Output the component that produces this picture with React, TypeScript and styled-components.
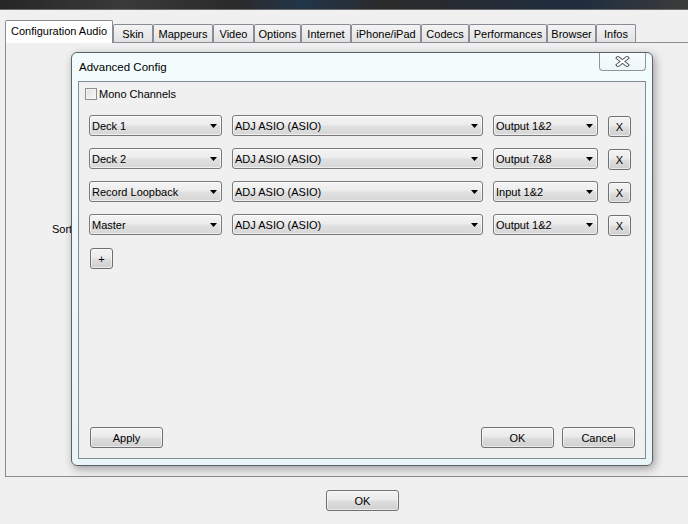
import React from 'react';
import styled, { createGlobalStyle } from 'styled-components';

const GlobalStyle = createGlobalStyle`
  html, body {
    margin: 0;
    padding: 0;
    background: #f0f0f0;
    overflow: hidden;
  }
  body {
    font-family: "Liberation Sans", Arial, sans-serif;
    font-size: 11px;
    color: #000;
  }
`;

const Page = styled.div`
  position: relative;
  width: 688px;
  height: 524px;
  overflow: hidden;
`;

const TopStrip = styled.div`
  height: 9px;
  border-bottom: 1px solid #6a6a6a;
  background: linear-gradient(
    90deg,
    #262626 0%,
    #3a3a3a 18%,
    #2a2a2a 34%,
    #22354a 44%,
    #2a2a2a 56%,
    #1f2d3f 84%,
    #3c3c3c 100%
  );
`;

const TabStrip = styled.div`
  display: flex;
  align-items: flex-end;
  height: 22px;
  margin-top: 10px;
  padding-left: 5px;
  position: relative;
  z-index: 1;
`;

const Tab = styled.div<{ $w: number; $active?: boolean }>`
  box-sizing: border-box;
  width: ${(p) => p.$w}px;
  height: ${(p) => (p.$active ? 23 : 18)}px;
  margin-bottom: ${(p) => (p.$active ? -1 : 0)}px;
  border: 1px solid #898c95;
  border-bottom: none;
  border-radius: 2px 2px 0 0;
  background: ${(p) =>
    p.$active ? '#ffffff' : 'linear-gradient(#f4f4f4, #e2e2e2)'};
  display: flex;
  align-items: center;
  justify-content: center;
  padding-bottom: ${(p) => (p.$active ? 2 : 0)}px;
  font-size: 11px;
  white-space: nowrap;
`;

const Panel = styled.div`
  box-sizing: border-box;
  height: 435px;
  margin-left: 5px;
  margin-right: -20px;
  border: 1px solid #898c95;
  background: #f0f0f0;
  padding: 179px 0 0 46px;
`;

const SortLabel = styled.div`
  font-size: 11px;
  line-height: 14px;
`;

const BottomBar = styled.div`
  display: flex;
  padding-left: 326px;
  margin-top: 13px;
`;

const Dialog = styled.div`
  position: absolute;
  left: 71px;
  top: 52px;
  width: 582px;
  height: 414px;
  box-sizing: border-box;
  border: 1px solid #5b6066;
  border-radius: 6px;
  background: linear-gradient(#f3fcfd, #eaf5f8);
  box-shadow: 2px 3px 10px rgba(0, 0, 0, 0.35);
  display: flex;
  flex-direction: column;
  padding: 0 6px 6px 6px;
`;

const TitleBar = styled.div`
  height: 28px;
  display: flex;
  justify-content: space-between;
  align-items: flex-start;
`;

const Title = styled.div`
  font-size: 11.5px;
  line-height: 28px;
  padding-left: 1px;
  color: #000;
`;

const CloseButton = styled.div`
  box-sizing: border-box;
  width: 47px;
  height: 18px;
  border: 1px solid #8d949a;
  border-top: none;
  border-radius: 0 0 4px 4px;
  background: linear-gradient(#f7fdfe, #eef6f8);
  display: flex;
  align-items: center;
  justify-content: center;
`;

const Client = styled.div`
  flex: 1;
  display: flex;
  flex-direction: column;
  border: 1px solid #838a90;
  background: #f0f0f0;
  padding: 6px 10px 10px 10px;
`;

const CheckRow = styled.label`
  display: flex;
  align-items: center;
  gap: 2px;
  margin-left: -4px;
  height: 12px;
  font-size: 11px;
`;

const CheckBox = styled.span`
  box-sizing: border-box;
  width: 12px;
  height: 12px;
  border: 1px solid #8e8f8f;
  background: linear-gradient(135deg, #dcdcdc, #fbfbfb);
  box-shadow: inset 0 0 0 1px #f4f4f4;
`;

const Rows = styled.div`
  display: flex;
  flex-direction: column;
  gap: 12px;
  margin-top: 15px;
`;

const Row = styled.div`
  display: flex;
  align-items: flex-start;
  gap: 10px;
  height: 21px;
`;

const Combo = styled.div<{ $w: number }>`
  box-sizing: border-box;
  width: ${(p) => p.$w}px;
  height: 21px;
  border: 1px solid #7a7a7a;
  border-radius: 3px;
  background: linear-gradient(#f5f5f5 0%, #ececec 45%, #e0e0e0 55%, #d6d6d6 100%);
  box-shadow: inset 0 0 0 1px rgba(255, 255, 255, 0.6);
  display: flex;
  align-items: center;
  justify-content: space-between;
  padding: 0 4px 0 2px;
  font-size: 11px;
  white-space: nowrap;
`;

const Button = styled.button<{ $w: number; $top?: number; $left?: number }>`
  box-sizing: border-box;
  width: ${(p) => p.$w}px;
  height: 21px;
  flex-shrink: 0;
  margin-top: ${(p) => p.$top ?? 0}px;
  margin-left: ${(p) => p.$left ?? 0}px;
  padding: 0;
  border: 1px solid #707070;
  border-radius: 3px;
  background: linear-gradient(#f3f3f3 0%, #ebebeb 45%, #dddddd 55%, #cfcfcf 100%);
  box-shadow: inset 0 0 0 1px rgba(255, 255, 255, 0.55);
  font-family: "Liberation Sans", Arial, sans-serif;
  font-size: 11px;
  color: #000;
  display: flex;
  align-items: center;
  justify-content: center;
`;

const Footer = styled.div`
  margin-top: auto;
  display: flex;
  gap: 8px;
`;

const Spacer = styled.div`
  flex: 1;
`;

const Arrow = () => (
  <svg width="7" height="4" viewBox="0 0 7 4">
    <path d="M0 0 H7 L3.5 4 Z" fill="#000" />
  </svg>
);

const CloseGlyph = () => (
  <svg width="15" height="11" viewBox="0 0 15 11">
    <path d="M3 2 L12 9 M12 2 L3 9" stroke="#4e5660" strokeWidth="4" strokeLinecap="square" />
    <path d="M3 2 L12 9 M12 2 L3 9" stroke="#ffffff" strokeWidth="2" strokeLinecap="square" />
  </svg>
);

const tabs = [
  { label: 'Configuration Audio', w: 108, active: true },
  { label: 'Skin', w: 40 },
  { label: 'Mappeurs', w: 60 },
  { label: 'Video', w: 41 },
  { label: 'Options', w: 47 },
  { label: 'Internet', w: 50 },
  { label: 'iPhone/iPad', w: 70 },
  { label: 'Codecs', w: 48 },
  { label: 'Performances', w: 78 },
  { label: 'Browser', w: 49 },
  { label: 'Infos', w: 40 },
];

const routes = [
  { source: 'Deck 1', device: 'ADJ ASIO (ASIO)', channel: 'Output 1&2' },
  { source: 'Deck 2', device: 'ADJ ASIO (ASIO)', channel: 'Output 7&8' },
  { source: 'Record Loopback', device: 'ADJ ASIO (ASIO)', channel: 'Input 1&2' },
  { source: 'Master', device: 'ADJ ASIO (ASIO)', channel: 'Output 1&2' },
];

const App = () => {
  return (
    <Page>
      <GlobalStyle />
      <TopStrip />
      <TabStrip>
        {tabs.map((t) => (
          <Tab key={t.label} $w={t.w} $active={t.active}>
            {t.label}
          </Tab>
        ))}
      </TabStrip>
      <Panel>
        <SortLabel>Sortie</SortLabel>
      </Panel>
      <BottomBar>
        <Button $w={73}>OK</Button>
      </BottomBar>

      <Dialog>
        <TitleBar>
          <Title>Advanced Config</Title>
          <CloseButton>
            <CloseGlyph />
          </CloseButton>
        </TitleBar>
        <Client>
          <CheckRow>
            <CheckBox />
            Mono Channels
          </CheckRow>
          <Rows>
            {routes.map((r, i) => (
              <Row key={i}>
                <Combo $w={133}>
                  {r.source}
                  <Arrow />
                </Combo>
                <Combo $w={251}>
                  {r.device}
                  <Arrow />
                </Combo>
                <Combo $w={105}>
                  {r.channel}
                  <Arrow />
                </Combo>
                <Button $w={23} $top={1}>
                  X
                </Button>
              </Row>
            ))}
            <Row>
              <Button $w={23} $top={1} $left={1}>
                +
              </Button>
            </Row>
          </Rows>
          <Footer>
            <Button $w={73} $left={1}>
              Apply
            </Button>
            <Spacer />
            <Button $w={73}>OK</Button>
            <Button $w={73}>Cancel</Button>
          </Footer>
        </Client>
      </Dialog>
    </Page>
  );
};

export default App;
